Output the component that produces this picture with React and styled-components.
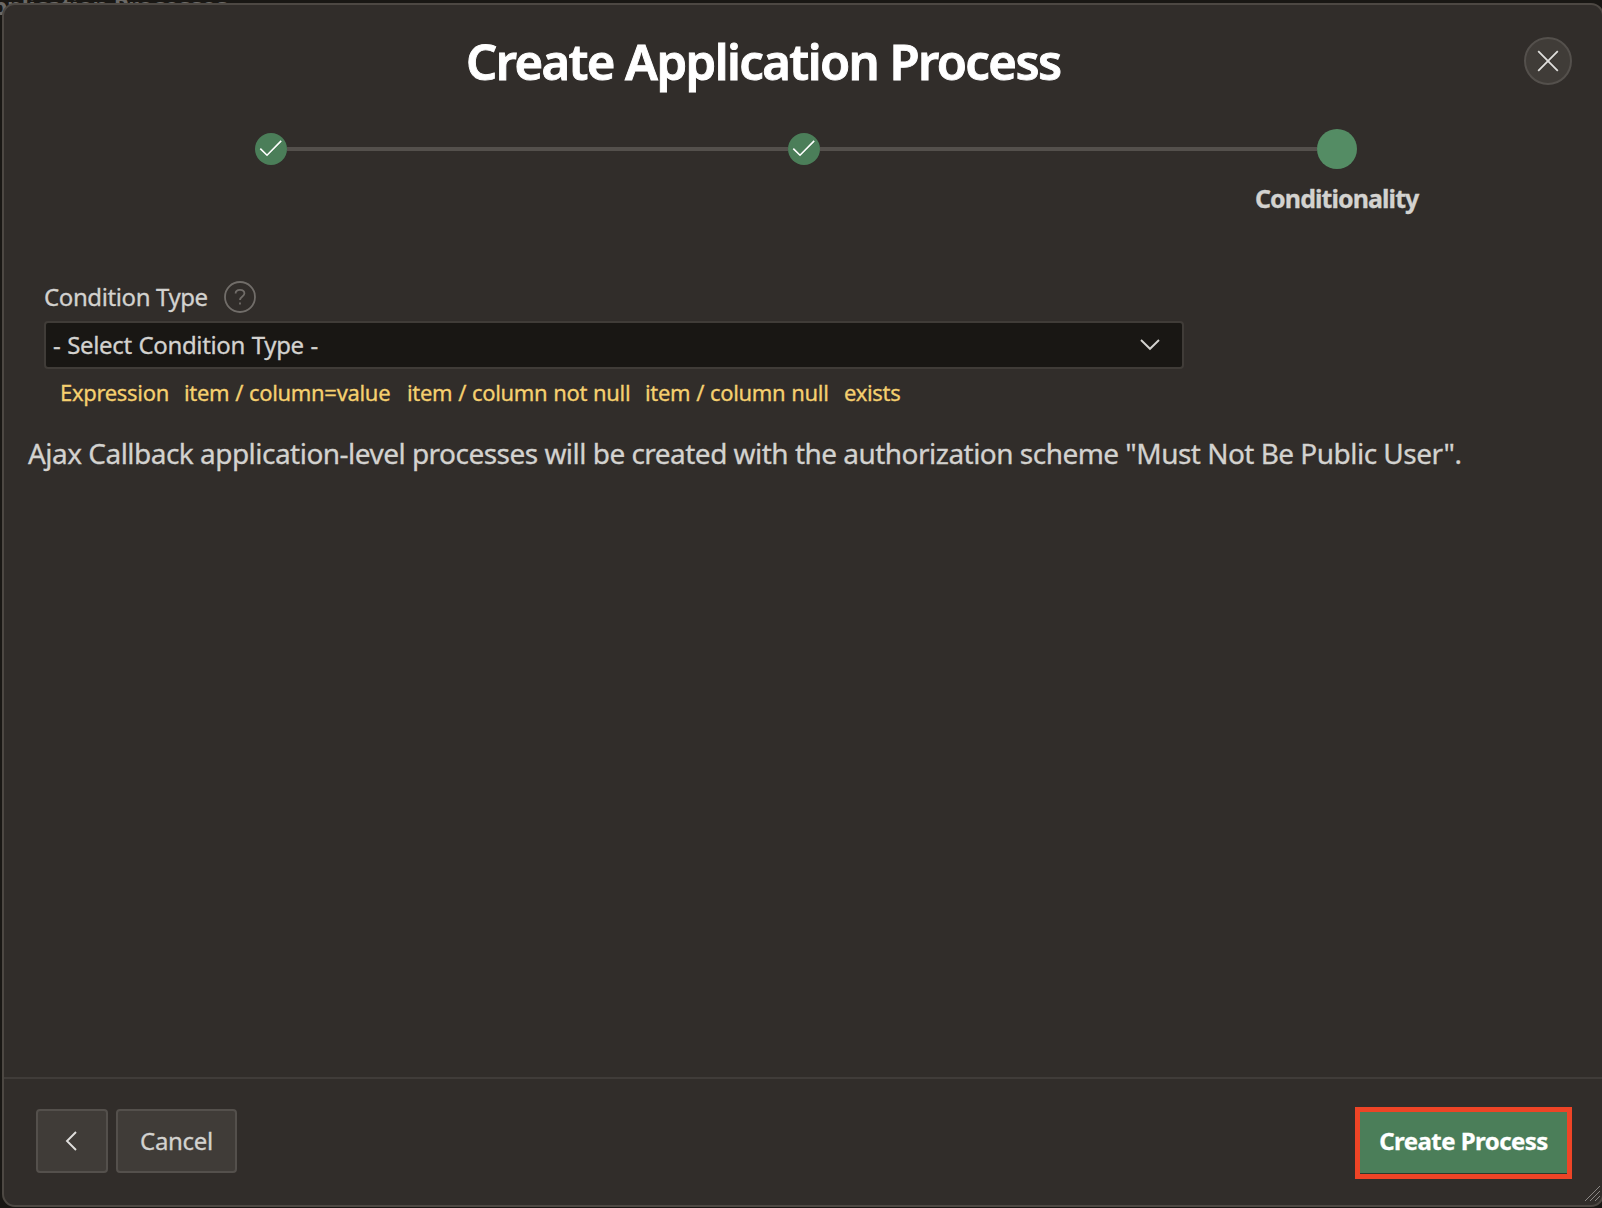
import React from "react";
import styled, { createGlobalStyle } from "styled-components";

const Global = createGlobalStyle`
  * { box-sizing: border-box; }
  html, body { margin: 0; background: #191714; overflow: hidden; }
  body { font-family: "Noto Sans", "Open Sans", sans-serif; color: #d3d2cf; }
  button { font: inherit; color: inherit; padding: 0; }
`;

const Page = styled.div`
  width: 1602px;
  height: 1208px;
  padding: 3px 0 0 2px;
  overflow: hidden;
  position: relative;
  background: #191714;
`;

const Backdrop = styled.div`
  position: absolute;
  top: -9px;
  left: -24px;
  font-size: 24px;
  line-height: 30px;
  font-weight: 700;
  letter-spacing: -0.4px;
  color: #6b6966;
  white-space: nowrap;
`;

const Dialog = styled.section`
  position: relative;
  width: 1602px;
  height: 1204px;
  display: flex;
  flex-direction: column;
  background: #312d2a;
  border: 2px solid #4d4843;
  border-radius: 13px;
  overflow: hidden;
`;

const Text = styled.span`
  display: inline-block;
  white-space: nowrap;
  font-size: ${(p) => p.$size}px;
  font-weight: ${(p) => p.$weight || 400};
  letter-spacing: ${(p) => p.$track || 0}px;
  word-spacing: ${(p) => p.$word || 0}px;
  line-height: ${(p) => p.$line}px;
  -webkit-text-stroke: ${(p) => p.$stroke || 0.3}px currentColor;
`;

const Header = styled.header`
  height: 119px;
  display: grid;
  grid-template-columns: 1fr 48px;
  padding: 24px 30px 0 0;
`;

const Heading = styled.h1`
  margin: 0;
  padding-left: 462px;
  color: #fff;
`;

const Close = styled.button`
  width: 48px;
  height: 48px;
  margin-top: 8px;
  border: 2px solid #54504c;
  border-radius: 50%;
  background: #403c38;
  display: grid;
  place-items: center;
`;

const Steps = styled.div`
  display: flex;
  align-items: center;
  height: 50px;
  padding-left: 251px;
`;

const Dot = styled.div`
  width: ${(p) => (p.$active ? 40 : 32)}px;
  height: ${(p) => (p.$active ? 40 : 32)}px;
  border-radius: 50%;
  background: ${(p) => (p.$active ? "#548c64" : "#4b7e59")};
  display: grid;
  place-items: center;
`;

const Track = styled.div`
  width: ${(p) => p.$w}px;
  height: 4px;
  background: #54504c;
`;

const StepLabel = styled.div`
  padding-left: 1251px;
  padding-top: 2px;
  height: 90px;
`;

const Form = styled.div`
  padding-left: 40px;
  display: flex;
  flex-direction: column;
`;

const LabelRow = styled.label`
  display: flex;
  align-items: center;
  justify-content: space-between;
  width: 212px;
  height: 32px;
  margin-top: 17px;
`;

const Select = styled.div`
  width: 1140px;
  height: 48px;
  margin-top: 8px;
  border: 2px solid #403c38;
  border-radius: 4px;
  background: #191714;
  display: flex;
  align-items: center;
  justify-content: space-between;
  padding: 0 22px 0 7px;
`;

const Links = styled.div`
  display: flex;
  padding: 7px 0 0 16px;
  color: #f5d06f;
`;

const LinkSlot = styled.a`
  width: ${(p) => p.$w}px;
`;

const Note = styled.p`
  margin: 0;
  padding: 25px 0 0 24px;
`;

const Footer = styled.footer`
  margin-top: auto;
  height: 128px;
  border-top: 2px solid #403c39;
  display: flex;
  align-items: flex-start;
  padding: 28px 30px 0 32px;
`;

const Button = styled.button`
  width: ${(p) => p.$w}px;
  height: 64px;
  margin: 2px 8px 0 0;
  border: 2px solid #54504c;
  border-radius: 4px;
  background: #403c38;
  display: grid;
  place-items: center;
`;

const Primary = styled.button`
  margin-left: auto;
  width: 217px;
  height: 72px;
  padding-bottom: 4px;
  border: 5px solid #ee4426;
  background: #4b7e59;
  box-shadow: inset 0 -1px #2a3a2e;
  color: #fff;
  display: grid;
  place-items: center;
`;

const Grip = styled.svg`
  position: absolute;
  right: 0;
  bottom: 2px;
`;

const Check = () => (
  <svg width="32" height="32" viewBox="0 0 32 32" fill="none" stroke="#fff" strokeWidth="1.6">
    <path d="M5.3 15.6 L12 22.2 L26.2 7.9" />
  </svg>
);

const links = [
  ["Expression", 124],
  ["item / column=value", 223],
  ["item / column not null", 238],
  ["item / column null", 199],
  ["exists", 60],
];

export default function App() {
  return (
    <Page>
      <Global />
      <Backdrop>Application Processes</Backdrop>
      <Dialog role="dialog">
        <Header>
          <Heading>
            <Text $size={49} $weight={600} $track={-1.58} $stroke={0.9} $line={65}>Create Application Process</Text>
          </Heading>
          <Close aria-label="Close">
            <svg width="22" height="22" viewBox="0 0 22 22" fill="none" stroke="#e0dfdd" strokeWidth="1.8">
              <path d="M1.2 1.2 L20.8 20.8 M20.8 1.2 L1.2 20.8" />
            </svg>
          </Close>
        </Header>
        <Steps>
          <Dot><Check /></Dot>
          <Track $w={501} />
          <Dot><Check /></Dot>
          <Track $w={497} />
          <Dot $active />
        </Steps>
        <StepLabel>
          <Text $size={25} $weight={700} $track={-0.93} $line={44}>Conditionality</Text>
        </StepLabel>
        <Form>
          <LabelRow>
            <Text $size={24} $track={-0.4} $line={32}>Condition Type</Text>
            <svg width="32" height="32" viewBox="0 0 32 32" fill="none" stroke="#716d69" strokeWidth="1.8">
              <circle cx="16" cy="16" r="15" />
              <path d="M11.6 12.6 C11.6 7.6 20.4 7.6 20.4 12.6 C20.4 15.6 16 15.4 16 19" />
              <path d="M16 21.6 V23.6" />
            </svg>
          </LabelRow>
          <Select>
            <Text $size={24} $track={-0.35} $word={0.9} $line={32}>- Select Condition Type -</Text>
            <svg width="20" height="12" viewBox="0 0 20 12" fill="none" stroke="#d3d2cf" strokeWidth="1.9">
              <path d="M1 1 L10 9.8 L19 1" />
            </svg>
          </Select>
          <Links>
            {links.map(([label, w]) => (
              <LinkSlot key={label} $w={w}>
                <Text $size={22} $track={-0.32} $word={0.5} $line={32}>{label}</Text>
              </LinkSlot>
            ))}
          </Links>
        </Form>
        <Note>
          <Text $size={28} $track={-0.524} $line={40}>
            Ajax Callback application-level processes will be created with the authorization scheme "Must Not Be Public User".
          </Text>
        </Note>
        <Footer>
          <Button $w={72} aria-label="Previous">
            <svg width="14" height="20" viewBox="0 0 14 20" fill="none" stroke="#e0dfdd" strokeWidth="1.9">
              <path d="M11 1 L2 10 L11 19" />
            </svg>
          </Button>
          <Button $w={121}>
            <Text $size={24} $track={-0.3} $line={32}>Cancel</Text>
          </Button>
          <Primary>
            <Text $size={24} $weight={700} $track={-0.55} $line={32}>Create Process</Text>
          </Primary>
        </Footer>
        <Grip width="18" height="18" viewBox="0 0 18 18" stroke="#8a8784" strokeWidth="1">
          <path d="M1 16 L16 1 M6 16 L16 6 M11 16 L16 11" />
        </Grip>
      </Dialog>
    </Page>
  );
}
